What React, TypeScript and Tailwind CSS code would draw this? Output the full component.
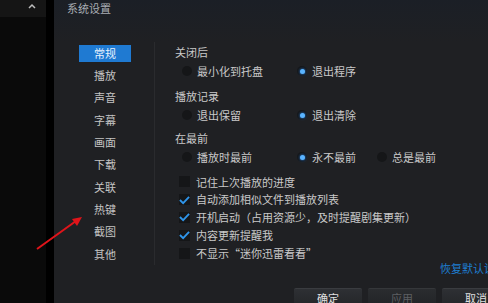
import React from 'react';

const font = { fontFamily: '"Noto Sans CJK SC", "Noto Sans", sans-serif' };

function Radio({ on }: { on?: boolean }) {
  return (
    <span className="flex h-[10px] w-[10px] shrink-0 items-center justify-center rounded-full bg-[#151618]">
      {on && <span className="h-[5px] w-[5px] rounded-full bg-[#5ab4ff] shadow-[0_0_3px_#2b8fff]" />}
    </span>
  );
}

function Check({ on }: { on?: boolean }) {
  return (
    <span className="flex h-[11px] w-[11px] shrink-0 items-center justify-center bg-[#151618]">
      {on && (
        <svg width="12" height="10" viewBox="0 0 12 10">
          <path d="M1 5 L4.5 8.5 L11 1.5" fill="none" stroke="#2f95ea" strokeWidth="2" />
        </svg>
      )}
    </span>
  );
}

function RadioItem({ label, on, w }: { label: string; on?: boolean; w: string }) {
  return (
    <div className={`flex shrink-0 items-center gap-[5px] ${w}`}>
      <Radio on={on} />
      <span>{label}</span>
    </div>
  );
}

const menu = ['常规', '播放', '声音', '字幕', '画面', '下载', '关联', '热键', '截图', '其他'];

const checks: [string, boolean][] = [
  ['记住上次播放的进度', false],
  ['自动添加相似文件到播放列表', true],
  ['开机启动（占用资源少，及时提醒剧集更新）', true],
  ['内容更新提醒我', true],
  ['不显示“迷你迅雷看看”', false],
];

export default function App() {
  return (
    <div className="relative flex h-[303px] w-[488px] overflow-hidden bg-[#0b0b0b] text-[11px] text-[#c9c9c9]" style={font}>
      {/* left strip */}
      <div className="flex w-[46px] shrink-0 flex-col">
        <div className="flex h-[17px] items-start justify-end bg-[#151515] pr-[10px]">
          <svg width="8" height="6" viewBox="0 0 8 6" className="mt-[3px]">
            <path d="M1 5 L4 2 L7 5" fill="none" stroke="#bdbdbd" strokeWidth="1.5" />
          </svg>
        </div>
        <div className="flex-1 bg-[#0a0a0a]" />
      </div>
      <div className="w-[8px] shrink-0 bg-black" />

      {/* dialog */}
      <div className="flex min-w-0 flex-1 flex-col bg-[#1f2023]">
        <div className="h-[42px] shrink-0 bg-gradient-to-b from-[#1b1f26] to-[#1f2023] pl-[13px] pt-[1px] text-[11px] leading-[14px] text-[#a9adb3]">
          系统设置
        </div>
        <div className="flex shrink-0">
          {/* sidebar */}
          <div className="flex h-[223px] w-[101px] shrink-0 flex-col border-r border-[#2a2b2e] pl-[25px]">
            {menu.map((m, i) => (
              <div key={m} className="flex h-[22.3px] shrink-0 items-center">
                <div
                  className={`flex h-[17px] w-[52px] items-center justify-center ${
                    i === 0 ? 'bg-[#1f7ad2] text-[#e8f2ff]' : 'text-[#c4c4c4]'
                  }`}
                >
                  {m}
                </div>
              </div>
            ))}
          </div>

          {/* content */}
          <div className="flex min-w-0 flex-1 flex-col pl-[20px] pt-[2px]">
            <div className="leading-[16px]">关闭后</div>
            <div className="mt-[3px] flex h-[16px] items-center pl-[7px]">
              <RadioItem label="最小化到托盘" w="w-[115px]" />
              <RadioItem label="退出程序" on w="w-[90px]" />
            </div>
            <div className="mt-[9px] leading-[16px]">播放记录</div>
            <div className="mt-[3px] flex h-[16px] items-center pl-[7px]">
              <RadioItem label="退出保留" w="w-[115px]" />
              <RadioItem label="退出清除" on w="w-[90px]" />
            </div>
            <div className="mt-[7px] leading-[16px]">在最前</div>
            <div className="mt-[3px] flex h-[16px] items-center pl-[7px]">
              <RadioItem label="播放时最前" w="w-[115px]" />
              <RadioItem label="永不最前" on w="w-[80px]" />
              <RadioItem label="总是最前" w="w-[80px]" />
            </div>
            <div className="mt-[8px] flex flex-col">
              {checks.map(([t, on]) => (
                <div key={t} className="flex h-[17.8px] items-center gap-[6px] pl-[4px]">
                  <Check on={on} />
                  <span className="whitespace-nowrap">{t}</span>
                </div>
              ))}
            </div>
            <div className="-mt-[2px] flex h-[14px] justify-end">
              <span className="w-[48px] shrink-0 whitespace-nowrap text-[#1e7fd2]">恢复默认设置</span>
            </div>
          </div>
        </div>
        <div className="mt-[14px] flex shrink-0 gap-[6px] pl-[240px]">
          <div className="flex h-[16px] w-[68px] shrink-0 items-start justify-center rounded-t-[2px] border-t border-[#3a3c40] bg-gradient-to-b from-[#2e3034] to-[#25272a] pt-[1px] text-[#e0e0e0]">确定</div>
          <div className="flex h-[16px] w-[68px] shrink-0 items-start justify-center rounded-t-[2px] border-t border-[#35373a] bg-gradient-to-b from-[#2a2c2f] to-[#232528] pt-[1px] text-[#5d5f62]">应用</div>
          <div className="flex h-[16px] w-[68px] shrink-0 items-start justify-center rounded-t-[2px] border-t border-[#3a3c40] bg-gradient-to-b from-[#2e3034] to-[#25272a] pt-[1px] text-[#e0e0e0]">取消</div>
        </div>
      </div>

      {/* red annotation arrow */}
      <svg className="pointer-events-none absolute left-0 top-0" width="488" height="303">
        <line x1="37" y1="249" x2="76" y2="221" stroke="#e0141a" strokeWidth="2" />
        <path d="M82 217 L72 219 L77 226 Z" fill="#e0141a" />
      </svg>
    </div>
  );
}
